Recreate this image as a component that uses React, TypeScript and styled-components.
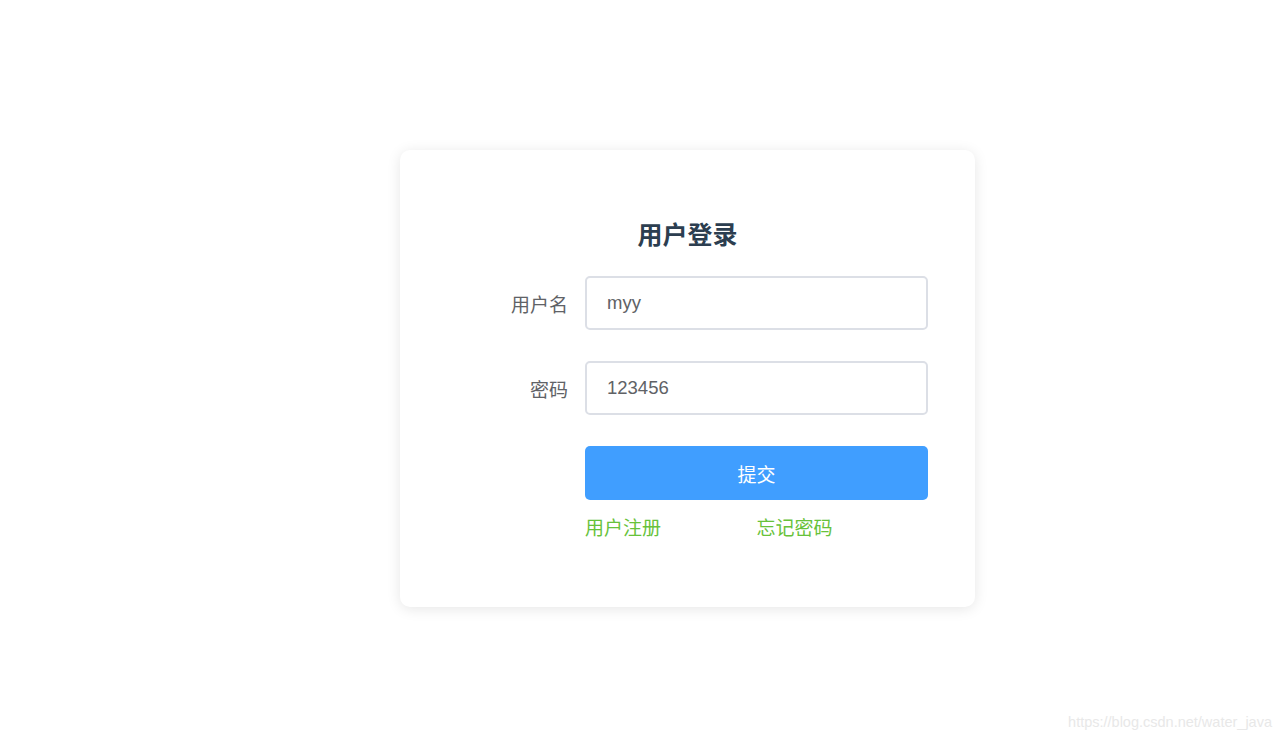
import styled, { createGlobalStyle } from 'styled-components';

const GlobalStyle = createGlobalStyle`
  html, body {
    margin: 0;
    padding: 0;
    background: #ffffff;
    font-family: "Liberation Sans", "Noto Sans CJK SC", sans-serif;
  }
  * {
    box-sizing: border-box;
  }
`;

const Page = styled.div`
  width: 1280px;
  height: 738px;
  position: relative;
  padding-top: 150px;
  padding-left: 400px;
`;

const Card = styled.div`
  width: 575px;
  height: 457px;
  background: #ffffff;
  border-radius: 10px;
  box-shadow: 0 2px 14px rgba(0, 0, 0, 0.1);
  padding: 70px 47px 0 68px;
  display: flex;
  flex-direction: column;
`;

const Title = styled.h3`
  margin: 0 0 26px -21px;
  text-align: center;
  font-size: 25px;
  line-height: 30px;
  font-weight: 700;
  color: #2c3e50;
`;

const Row = styled.div<{ $gap: number }>`
  display: grid;
  grid-template-columns: 100px 343px;
  column-gap: 17px;
  align-items: center;
  margin-bottom: ${(p) => p.$gap}px;
`;

const Label = styled.label`
  text-align: right;
  font-size: 19px;
  color: #606266;
`;

const Input = styled.input`
  width: 343px;
  height: 54px;
  border: 2px solid #dcdfe6;
  border-radius: 5px;
  padding: 0 20px;
  font-family: inherit;
  font-size: 18.5px;
  color: #606266;
  outline: none;
  background: #ffffff;
`;

const Submit = styled.button`
  width: 343px;
  height: 54px;
  border: none;
  border-radius: 5px;
  background: #409eff;
  color: #ffffff;
  font-family: inherit;
  font-size: 19px;
  cursor: pointer;
`;

const Links = styled.div`
  display: grid;
  grid-template-columns: 1fr 1fr;
`;

const TextLink = styled.a`
  font-size: 19px;
  line-height: 26px;
  color: #67c23a;
  text-decoration: none;
  cursor: pointer;
`;

const Watermark = styled.div`
  position: absolute;
  right: 8px;
  bottom: 8px;
  font-size: 14.5px;
  color: #e8e8e8;
`;

export const App = () => {
  return (
    <>
      <GlobalStyle />
      <Page>
        <Card>
          <Title>用户登录</Title>
          <Row $gap={31}>
            <Label>用户名</Label>
            <Input defaultValue="myy" />
          </Row>
          <Row $gap={31}>
            <Label>密码</Label>
            <Input defaultValue="123456" />
          </Row>
          <Row $gap={16}>
            <span />
            <Submit>提交</Submit>
          </Row>
          <Row $gap={0}>
            <span />
            <Links>
              <TextLink>用户注册</TextLink>
              <TextLink>忘记密码</TextLink>
            </Links>
          </Row>
        </Card>
        <Watermark>https://blog.csdn.net/water_java</Watermark>
      </Page>
    </>
  );
};

export default App;
